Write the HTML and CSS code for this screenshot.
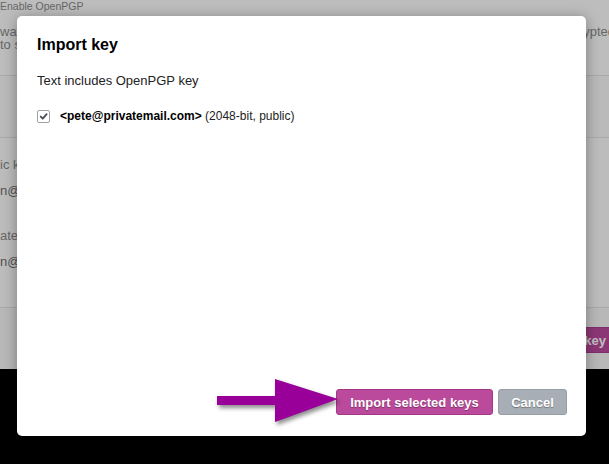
FILE: index.html
```html
<!DOCTYPE html>
<html>
<head>
<meta charset="utf-8">
<link rel="stylesheet" href="styles.css">
</head>
<body>
<div class="page">
  <section class="row row-intro">
    <div class="page-title">Enable OpenPGP</div>
    <div class="intro">
      <div class="intro-left"><div>want to</div><div>to send</div></div>
      <div class="intro-right">encrypted</div>
    </div>
  </section>
  <section class="row row-mid"></section>
  <section class="row row-keys">
    <div class="key-label">ic key</div>
    <div class="key-value">n@privatemail.com</div>
    <div class="key-label spaced">ate key</div>
    <div class="key-value">n@privatemail.com</div>
  </section>
  <section class="row row-foot">
    <button class="bg-btn">Generate key</button>
  </section>
</div>
<div class="backdrop"></div>
<div class="modal">
  <h2 class="modal-title">Import key</h2>
  <p class="modal-text">Text includes OpenPGP key</p>
  <label class="key-row">
    <span class="check"><svg width="13" height="13" viewBox="0 0 13 13"><path d="M3.2 6.6 L5.6 9 L10.2 3.8" fill="none" stroke="#4b505a" stroke-width="2.2" stroke-linecap="round" stroke-linejoin="round"/></svg></span>
    <span><b>&lt;pete@privatemail.com&gt;</b> (2048-bit, public)</span>
  </label>
  <div class="modal-actions">
    <button class="btn btn-primary">Import selected keys</button>
    <button class="btn btn-grey">Cancel</button>
  </div>
</div>
<svg class="arrow" width="135" height="60" viewBox="0 0 135 60">
  <polygon points="7,24 65,24 65,7 128,27 65,50 65,33 7,33" fill="#990099"/>
</svg>
</body>
</html>
```

FILE: styles.css
```css
html, body {
  margin: 0;
  padding: 0;
  width: 609px;
  height: 464px;
  overflow: hidden;
}
body {
  background: #000;
  font-family: "Liberation Sans", Arial, sans-serif;
  font-size: 13px;
  position: relative;
}
.page {
  width: 609px;
  height: 369px;
  background: #fff;
  color: #8a8a8a;
  overflow: hidden;
}
.row {
  box-sizing: border-box;
  border-bottom: 1px solid #e2e2e2;
}
.row-intro {
  height: 76px;
  background: #fdfdfd;
}
.page-title {
  font-size: 10.5px;
  line-height: 12px;
  color: #8a8a8a;
}
.intro {
  margin-top: 13px;
  display: flex;
  justify-content: space-between;
  line-height: 13px;
}
.intro-right {
  margin-right: -6px;
}
.row-mid {
  height: 62px;
  background: #f8f8f8;
}
.row-keys {
  height: 170px;
  padding-top: 18px;
  line-height: 18px;
  background: #fbfbfb;
}
.key-value {
  margin-top: 8px;
  color: #6e6e6e;
}
.key-label.spaced {
  margin-top: 27px;
}
.row-foot {
  height: 61px;
  border-bottom: none;
  display: flex;
  justify-content: flex-end;
  align-items: flex-start;
  padding-top: 19px;
  background: #f6f6f6;
}
.bg-btn {
  height: 26px;
  margin-right: -3px;
  padding: 0 5px 0 12px;
  border: 1px solid #a83f8e;
  border-radius: 3px;
  background: #bb4a9d;
  color: #fff;
  font-family: "Liberation Sans", Arial, sans-serif;
  font-weight: bold;
  font-size: 13px;
}
.backdrop {
  position: absolute;
  inset: 0;
  background: rgba(0, 0, 0, 0.25);
}
.modal {
  position: absolute;
  left: 17px;
  top: 16px;
  width: 569px;
  height: 420px;
  box-sizing: border-box;
  padding: 18px 19px 21px 20px;
  background: #fff;
  border-radius: 5px;
  box-shadow: 0 2px 14px rgba(0, 0, 0, 0.35);
  display: flex;
  flex-direction: column;
  color: #222;
}
.modal-title {
  margin: 0;
  font-size: 16px;
  line-height: 22px;
  font-weight: bold;
  color: #000;
}
.modal-text {
  margin: 16px 0 0;
  line-height: 18px;
}
.key-row {
  margin-top: 17px;
  display: flex;
  align-items: center;
  gap: 10px;
  font-size: 12px;
  line-height: 18px;
  color: #222;
}
.key-row b {
  color: #000;
}
.check {
  width: 13px;
  height: 13px;
  box-sizing: border-box;
  border: 1px solid #a0a0a0;
  border-radius: 2px;
  background: #fff;
  display: flex;
  align-items: center;
  justify-content: center;
}
.check svg {
  width: 11px;
  height: 11px;
}
.modal-actions {
  margin-top: auto;
  display: flex;
  justify-content: flex-end;
  gap: 5px;
}
.btn {
  height: 26px;
  box-sizing: border-box;
  border-radius: 3px;
  color: #fff;
  font-family: "Liberation Sans", Arial, sans-serif;
  font-weight: bold;
  font-size: 13px;
  text-shadow: 0 1px 1px rgba(0, 0, 0, 0.35);
}
.btn-primary {
  width: 157px;
  border: 1px solid #a3388a;
  background: #bb4a9c;
}
.btn-grey {
  width: 69px;
  border: 1px solid #979ea7;
  background: #a8aeb6;
}
.arrow {
  position: absolute;
  left: 210px;
  top: 372px;
  filter: drop-shadow(2px 3px 2px rgba(0, 0, 0, 0.45));
}
```
